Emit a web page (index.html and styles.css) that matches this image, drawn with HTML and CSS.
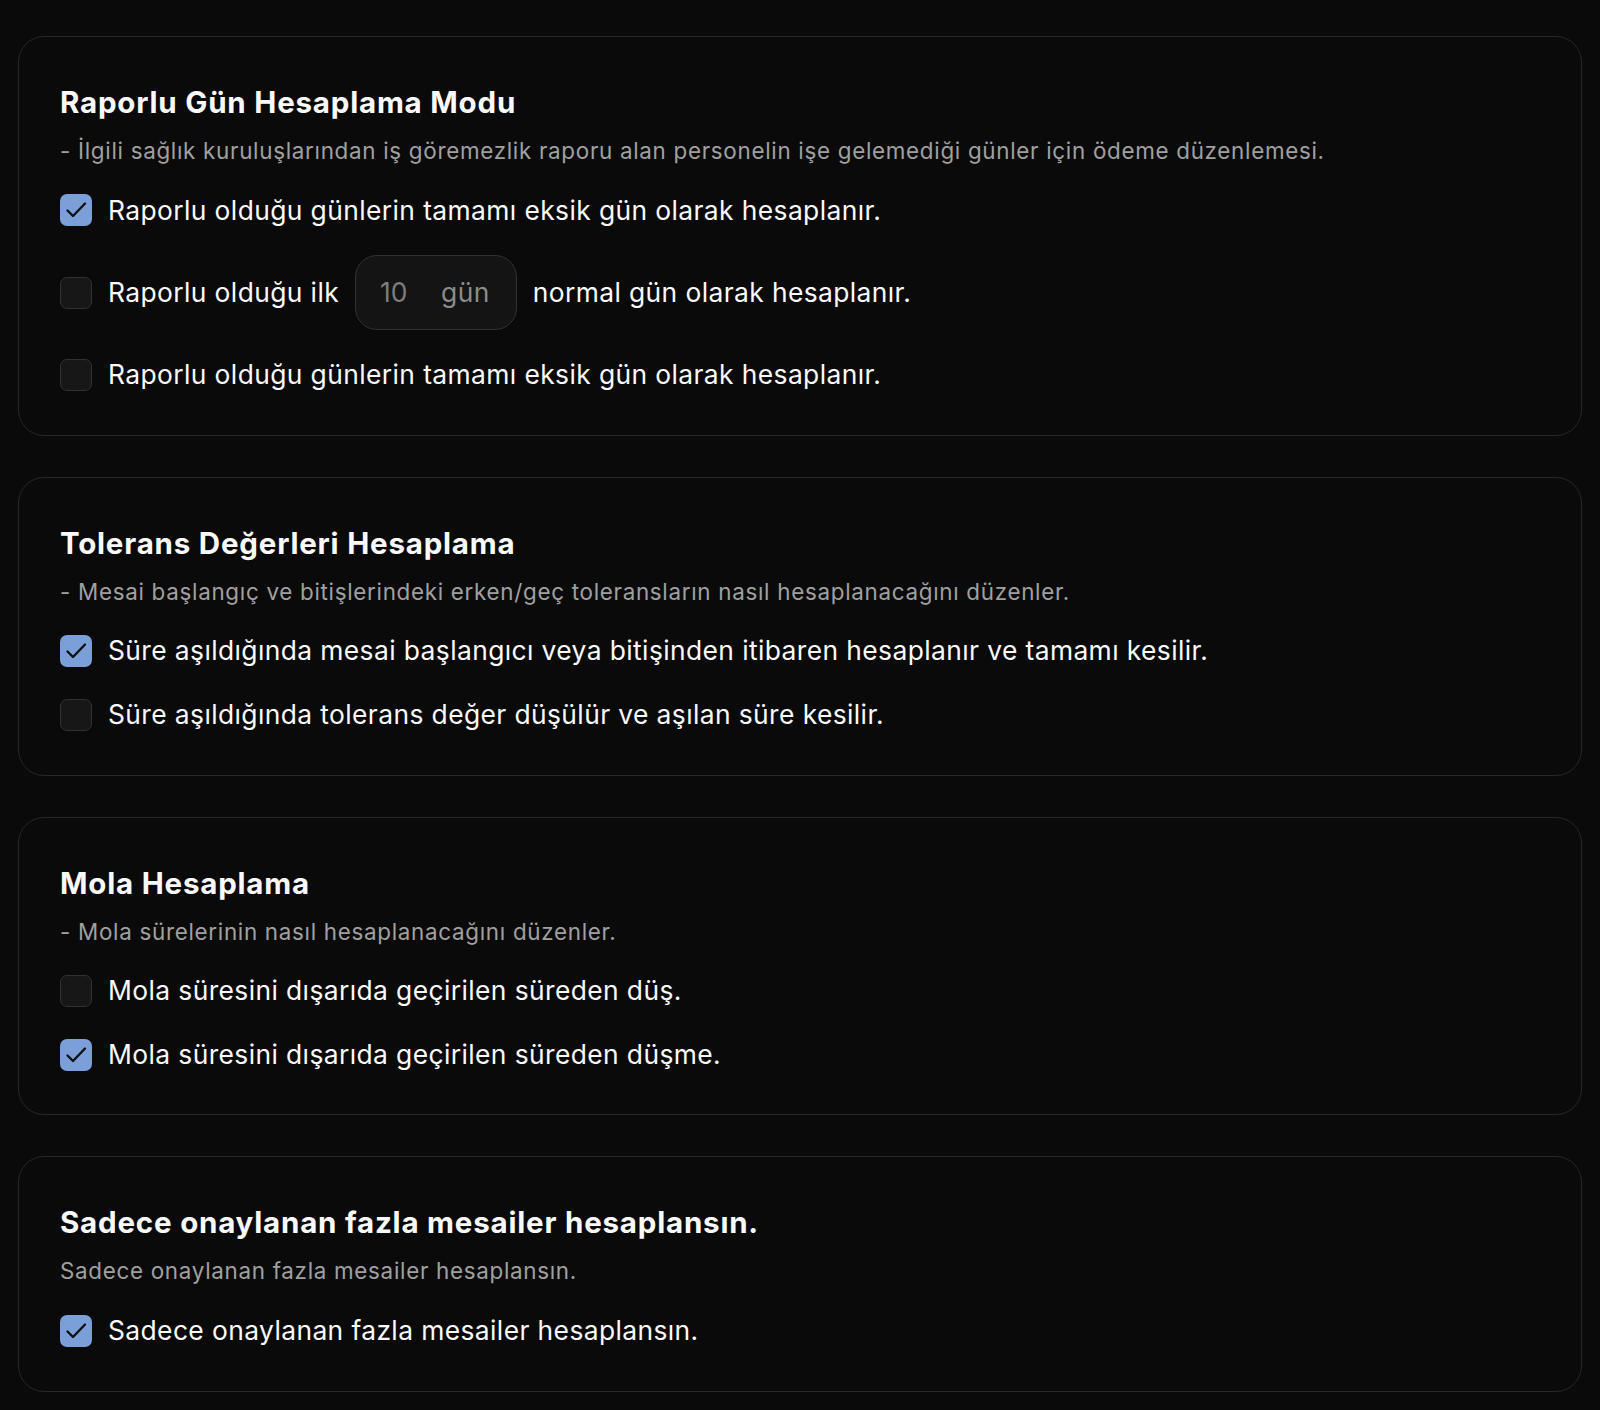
FILE: index.html
```html
<!DOCTYPE html>
<html lang="tr">
<head>
    <meta charset="UTF-8">
    <meta name="viewport" content="width=device-width, initial-scale=1.0">
    <title>Hesaplama Ayarları</title>
    <link rel="stylesheet" href="styles.css">
</head>
<body>
    <main class="settings">
        <section class="card">
            <header class="card-header">
                <h2 class="card-title">Raporlu Gün Hesaplama Modu</h2>
                <p class="card-desc">- İlgili sağlık kuruluşlarından iş göremezlik raporu alan personelin işe gelemediği günler için ödeme düzenlemesi.</p>
            </header>
            <div class="options">
                <label class="option">
                    <input type="checkbox" checked>
                    <span class="box"><svg viewBox="0 0 32 32"><path d="M7.5 16.5 L13 22 L25 9.5"/></svg></span>
                    <span>Raporlu olduğu günlerin tamamı eksik gün olarak hesaplanır.</span>
                </label>
                <label class="option">
                    <input type="checkbox">
                    <span class="box"><svg viewBox="0 0 32 32"><path d="M7.5 16.5 L13 22 L25 9.5"/></svg></span>
                    <span>Raporlu olduğu ilk</span>
                    <span class="day-input">
                        <input type="text" value="10">
                        <span class="unit">gün</span>
                    </span>
                    <span>normal gün olarak hesaplanır.</span>
                </label>
                <label class="option">
                    <input type="checkbox">
                    <span class="box"><svg viewBox="0 0 32 32"><path d="M7.5 16.5 L13 22 L25 9.5"/></svg></span>
                    <span>Raporlu olduğu günlerin tamamı eksik gün olarak hesaplanır.</span>
                </label>
            </div>
        </section>

        <section class="card">
            <header class="card-header">
                <h2 class="card-title">Tolerans Değerleri Hesaplama</h2>
                <p class="card-desc">- Mesai başlangıç ve bitişlerindeki erken/geç toleransların nasıl hesaplanacağını düzenler.</p>
            </header>
            <div class="options">
                <label class="option">
                    <input type="checkbox" checked>
                    <span class="box"><svg viewBox="0 0 32 32"><path d="M7.5 16.5 L13 22 L25 9.5"/></svg></span>
                    <span>Süre aşıldığında mesai başlangıcı veya bitişinden itibaren hesaplanır ve tamamı kesilir.</span>
                </label>
                <label class="option">
                    <input type="checkbox">
                    <span class="box"><svg viewBox="0 0 32 32"><path d="M7.5 16.5 L13 22 L25 9.5"/></svg></span>
                    <span>Süre aşıldığında tolerans değer düşülür ve aşılan süre kesilir.</span>
                </label>
            </div>
        </section>

        <section class="card">
            <header class="card-header">
                <h2 class="card-title">Mola Hesaplama</h2>
                <p class="card-desc">- Mola sürelerinin nasıl hesaplanacağını düzenler.</p>
            </header>
            <div class="options">
                <label class="option">
                    <input type="checkbox">
                    <span class="box"><svg viewBox="0 0 32 32"><path d="M7.5 16.5 L13 22 L25 9.5"/></svg></span>
                    <span>Mola süresini dışarıda geçirilen süreden düş.</span>
                </label>
                <label class="option">
                    <input type="checkbox" checked>
                    <span class="box"><svg viewBox="0 0 32 32"><path d="M7.5 16.5 L13 22 L25 9.5"/></svg></span>
                    <span>Mola süresini dışarıda geçirilen süreden düşme.</span>
                </label>
            </div>
        </section>

        <section class="card">
            <header class="card-header">
                <h2 class="card-title">Sadece onaylanan fazla mesailer hesaplansın.</h2>
                <p class="card-desc">Sadece onaylanan fazla mesailer hesaplansın.</p>
            </header>
            <div class="options">
                <label class="option">
                    <input type="checkbox" checked>
                    <span class="box"><svg viewBox="0 0 32 32"><path d="M7.5 16.5 L13 22 L25 9.5"/></svg></span>
                    <span>Sadece onaylanan fazla mesailer hesaplansın.</span>
                </label>
            </div>
        </section>
    </main>
</body>
</html>
```

FILE: styles.css
```css
:root {
    --page-bg: #0a0a0a;
    --card-border: #272727;
    --text: #fafafa;
    --muted: #a0a0a0;
    --accent: #7b9fd9;
    --box-bg: #171717;
    --box-border: #323232;
}

* {
    margin: 0;
    padding: 0;
    box-sizing: border-box;
}

body {
    background: var(--page-bg);
    color: var(--text);
    font-family: Inter, "Noto Sans", sans-serif;
    line-height: 1.5;
}

.settings {
    display: flex;
    flex-direction: column;
    gap: 41px;
    padding: 36px 18px;
}

.card {
    border: 1px solid var(--card-border);
    border-radius: 26px;
    padding: 40px 40px 40px 41px;
    display: flex;
    flex-direction: column;
    gap: 23px;
}

.card-header {
    padding-top: 3px;
}

.card-title {
    font-size: 29.5px;
    font-weight: 700;
    line-height: 1.5;
    letter-spacing: 0.8px;
}

.card-desc {
    margin-top: 9.75px;
    font-size: 22.4px;
    letter-spacing: 0.7px;
    color: var(--muted);
}

.options {
    display: flex;
    flex-direction: column;
    gap: 24px;
}

.option {
    display: flex;
    align-items: center;
    gap: 16px;
    font-size: 26.4px;
    letter-spacing: 0.4px;
    cursor: pointer;
}

.option > input[type="checkbox"] {
    display: none;
}

.box {
    flex: none;
    width: 32px;
    height: 32px;
    border-radius: 7px;
    background: var(--box-bg);
    border: 1.5px solid var(--box-border);
    display: flex;
}

.box svg {
    width: 100%;
    height: 100%;
    fill: none;
    stroke: #111;
    stroke-width: 2.4;
    stroke-linecap: round;
    stroke-linejoin: round;
    visibility: hidden;
}

.option > input:checked + .box {
    background: var(--accent);
    border: none;
}

.option > input:checked + .box svg {
    visibility: visible;
}

.day-input {
    display: flex;
    align-items: center;
    gap: 31px;
    height: 75px;
    margin: 1px 0;
    padding: 0 26px 0 24px;
    background: #141414;
    border: 1.5px solid var(--box-border);
    border-radius: 22px;
    color: #858585;
}

.day-input input {
    width: 30px;
    background: none;
    border: none;
    outline: none;
    font: inherit;
    color: #7d7d7d;
}

.unit {
    color: #8b8b8b;
}
```
